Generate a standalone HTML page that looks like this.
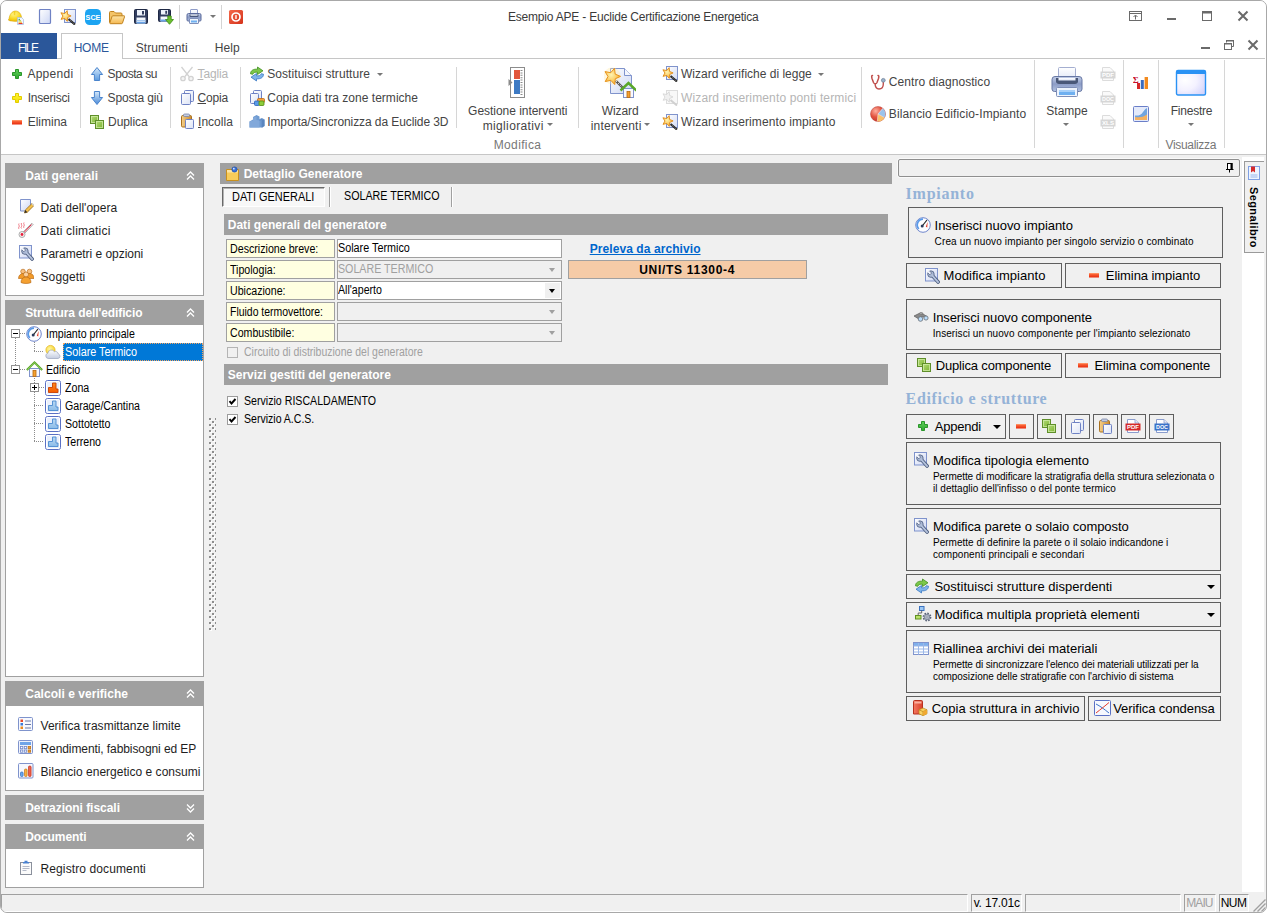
<!DOCTYPE html>
<html lang="it"><head><meta charset="utf-8"><title>Euclide Certificazione Energetica</title><style>
html,body{margin:0;padding:0}
body{width:1267px;height:913px;background:#fff;overflow:hidden;position:relative;font-family:"Liberation Sans",sans-serif}
#win{position:absolute;left:0;top:0;width:1265px;height:911px;border:1px solid #a8a8a8;border-radius:7px;background:#f0f0f0;overflow:hidden}
#win div,#win svg{position:absolute}
.ic{line-height:0}
.ic>svg{position:static!important;display:block}
#win span{white-space:pre}
.seg{font-family:"Liberation Sans",sans-serif;font-size:12px;color:#444}
.ms{font-family:"Liberation Sans",sans-serif;font-size:12px;color:#000}
.hdr{font-family:"Liberation Sans",sans-serif;font-size:12px;font-weight:bold;color:#fff}
.tah,.tah13{font-family:"Liberation Sans",sans-serif;font-size:13px;color:#000}
.tah10{font-family:"Liberation Sans",sans-serif;font-size:10px;color:#000}
.ser{font-family:"Liberation Serif",serif;font-size:16px;font-weight:bold;color:#95b3d7}
</style></head>
<body><div id="win"><div id="o" style="left:-1px;top:-1px;width:1267px;height:913px">
<div style="left:0px;top:0px;width:1267px;height:154px;background:#fff"></div>
<div class="ic" style="left:8px;top:9px;"><svg width="16" height="16" viewBox="0 0 16 16"><defs><radialGradient id="g22" cx="0.4" cy="0.3" r="0.8"><stop offset="0" stop-color="#fff68a"/><stop offset="0.6" stop-color="#f8d41e"/><stop offset="1" stop-color="#e8a800"/></radialGradient></defs><path d="M1 11.500c-.8-.3-.7-1.300 0-1.600C1.500 5.500 4 2 7.500 2s6 3 6.300 7.800c.7.300.9 1.300.1 1.700-3 1.200-10 1.200-12.900 0z" fill="url(#g22)" stroke="#d8a400" stroke-width=".5"/><path d="M6.500 2.200v4" stroke="#f0c000" stroke-width="1.600" opacity=".6"/><path d="M9.500 8.500h4l2 2v5h-6z" fill="#f2f7ff" stroke="#a4badc" stroke-width=".7"/><path d="M10.500 10.300h1.500" stroke="#2a9a3a" stroke-width="1"/><path d="M10.500 11.800h2.500" stroke="#9acc2a" stroke-width="1"/><path d="M10.500 13.200h3.500" stroke="#f4b41e" stroke-width="1"/><path d="M10.500 14.500h4" stroke="#e83a2a" stroke-width="1"/></svg></div>
<div class="ic" style="left:37px;top:9px;"><svg width="16" height="16" viewBox="0 0 16 16"><defs><linearGradient id="g12" x1="0" y1="0" x2="1" y2="1"><stop offset="0" stop-color="#ffffff"/><stop offset="1" stop-color="#ccd6f4"/></linearGradient></defs><rect x="2.500" y=".5" width="11" height="14" rx="1" fill="url(#g12)" stroke="#6f82c4" stroke-width="1.200"/></svg></div>
<div class="ic" style="left:60px;top:9px;"><svg width="16" height="16" viewBox="0 0 16 16"><defs><radialGradient id="g9" cx="0.4" cy="0.4" r="0.7"><stop offset="0" stop-color="#fff4b0"/><stop offset="1" stop-color="#f8a820"/></radialGradient><linearGradient id="g10" x1="0" y1="0" x2="1" y2="1"><stop offset="0" stop-color="#ffffff"/><stop offset="1" stop-color="#d4dcf4"/></linearGradient></defs><rect x="4.500" y=".5" width="11" height="13" fill="url(#g10)" stroke="#7f93cc"/><polygon points="7.15,1.65 7.58,5.44 11.10,6.92 7.62,8.50 7.31,12.30 4.73,9.48 1.02,10.36 2.90,7.04 0.92,3.77 4.66,4.54" fill="url(#g9)" stroke="#e08a18" stroke-width="0.9" stroke-linejoin="round"/><path d="M8.500 10L15 15.500" stroke="#1e1e1e" stroke-width="2.200"/><path d="M8.500 10L15 15.500" stroke="#b0b0b0" stroke-width=".8" stroke-dasharray="1 1"/></svg></div>
<div class="ic" style="left:85px;top:9px;"><svg width="16" height="16" viewBox="0 0 16 16"><rect x="0" y="0" width="16" height="16" rx="4.500" fill="#1ca4f2"/><text x="8" y="10.700" font-family="Liberation Sans, sans-serif" font-size="7.200" font-weight="bold" fill="#fff" text-anchor="middle">SCE</text></svg></div>
<div class="ic" style="left:109px;top:10px;"><svg width="16" height="16" viewBox="0 0 16 16"><defs><linearGradient id="g23" x1="0" y1="0" x2="0" y2="1"><stop offset="0" stop-color="#fde4a8"/><stop offset="1" stop-color="#f4b850"/></linearGradient></defs><path d="M.5 12.500V2.500a1 1 0 0 1 1-1h3.500l1.500 1.500h5.500a1 1 0 0 1 1 1v2" fill="#f4c468" stroke="#c0821e"/><path d="M.8 13L3 6.500a1 1 0 0 1 1-.7h11a.6.600 0 0 1 .6.800L13.500 13a1 1 0 0 1-1 .7H1.500a.7.700 0 0 1-.7-.7z" fill="url(#g23)" stroke="#c0821e" stroke-linejoin="round"/></svg></div>
<div class="ic" style="left:133px;top:9px;"><svg width="16" height="16" viewBox="0 0 16 16"><path d="M1.500 1.500a1 1 0 0 1 1-1h11a1 1 0 0 1 1 1v12a1 1 0 0 1-1 1h-11a1 1 0 0 1-1-1z" fill="#323e60" stroke="#1e2844"/><rect x="4" y="1" width="8" height="5.500" fill="#eef3fb"/><rect x="9" y="2" width="2" height="3.500" fill="#323e60"/><rect x="3.500" y="8.500" width="9" height="6" fill="#f4f8fe"/><rect x="3.500" y="11" width="9" height="1.500" fill="#a4c8f0"/><rect x="3.500" y="13" width="9" height="1.500" fill="#6aa4e8"/></svg></div>
<div class="ic" style="left:158px;top:9px;"><svg width="16" height="16" viewBox="0 0 16 16"><path d="M.5 1.500a1 1 0 0 1 1-1h10a1 1 0 0 1 1 1v10a1 1 0 0 1-1 1h-10a1 1 0 0 1-1-1z" fill="#323e60" stroke="#1e2844"/><rect x="3" y="1" width="7" height="4.500" fill="#eef3fb"/><rect x="7.300" y="1.800" width="1.800" height="3" fill="#323e60"/><rect x="2.500" y="7.500" width="8" height="5" fill="#f4f8fe"/><rect x="2.500" y="10.500" width="8" height="2" fill="#6aa4e8"/><path d="M9.800 7h3.400v3.500h2.300L11.500 15.300 7.500 10.500h2.300z" fill="#6cc02e" stroke="#3a8a12" stroke-width=".8" stroke-linejoin="round"/></svg></div>
<div class="ic" style="left:186px;top:9px;"><svg width="16" height="16" viewBox="0 0 16 16"><defs><linearGradient id="g14" x1="0" y1="0" x2="0" y2="1"><stop offset="0" stop-color="#c2cee8"/><stop offset="0.5" stop-color="#8c9cc6"/><stop offset="1" stop-color="#b2c2e2"/></linearGradient><linearGradient id="g15" x1="0" y1="0" x2="0" y2="1"><stop offset="0" stop-color="#ffffff"/><stop offset="1" stop-color="#dfe6f6"/></linearGradient></defs><rect x="4.500" y=".5" width="7" height="6" rx=".5" fill="url(#g15)" stroke="#8f9cc8"/><path d="M2.500 4.500h11a1.500 1.500 0 0 1 1.500 1.500v5a1 1 0 0 1-1 1h-12a1 1 0 0 1-1-1V6a1.500 1.500 0 0 1 1.500-1.500z" fill="url(#g14)" stroke="#5a6a9c"/><path d="M3.500 5.500h9V7a1 1 0 0 1-1 1h-7a1 1 0 0 1-1-1z" fill="#46557a"/><rect x="4.500" y="5.500" width="7" height="1.200" fill="#f4f8ff"/><rect x="3.500" y="9.500" width="9" height="5" rx=".5" fill="#eef4fd" stroke="#7f8fb8"/><rect x="5" y="11.500" width="6" height="2" fill="#6fb0f0"/></svg></div>
<div class="ic" style="left:228px;top:9px;"><svg width="16" height="16" viewBox="0 0 16 16"><defs><linearGradient id="g24" x1="0" y1="0" x2="1" y2="1"><stop offset="0" stop-color="#f4684a"/><stop offset="1" stop-color="#d4321a"/></linearGradient></defs><rect x="1" y="1" width="14" height="14" rx="1.500" fill="url(#g24)"/><circle cx="8" cy="8" r="4" fill="none" stroke="#fff" stroke-width="1.700"/><rect x="7.300" y="6" width="1.400" height="4" rx=".5" fill="#fff"/></svg></div>
<div style="left:179px;top:5px;width:1px;height:24px;background:#d4d4d4"></div>
<div style="left:221px;top:5px;width:1px;height:24px;background:#d4d4d4"></div>
<div style="left:209.500px;top:15px;width:0;height:0;border-left:3px solid transparent;border-right:3px solid transparent;border-top:3px solid #777"></div>
<div class="seg" style="left:508.0px;top:8.5px;line-height:16px;height:16px;color:#3a3a3a"><span id="t1" style="letter-spacing:-0.203px;">Esempio APE - Euclide Certificazione Energetica</span></div>
<svg style="left:1128px;top:10px" width="16" height="12" viewBox="0 0 16 12"><rect x="1.500" y="1.500" width="12" height="9" fill="none" stroke="#6a6a6a" stroke-width="1"/><path d="M1.500 3.500h12" stroke="#6a6a6a"/><path d="M7.500 9.500v-4M5.500 7l2-2 2 2" fill="none" stroke="#6a6a6a" stroke-width="1"/></svg>
<div style="left:1167px;top:18px;width:9px;height:2px;background:#6a6a6a"></div>
<svg style="left:1201px;top:10px" width="12" height="12" viewBox="0 0 12 12"><rect x="1.500" y="1.500" width="9" height="9" fill="none" stroke="#6a6a6a"/><rect x="1" y="1" width="10" height="2.500" fill="#6a6a6a"/></svg>
<svg style="left:1237px;top:10px" width="12" height="12" viewBox="0 0 12 12"><path d="M1.500 1.500l9 9M10.500 1.500l-9 9" stroke="#6a6a6a" stroke-width="2"/></svg>
<div style="left:1201px;top:47px;width:9px;height:2px;background:#6a6a6a"></div>
<svg style="left:1223px;top:39px" width="12" height="12" viewBox="0 0 12 12"><path d="M3.500 3.500v-2h7v6h-2" fill="none" stroke="#6a6a6a"/><rect x="3" y="1" width="8" height="1.500" fill="#6a6a6a"/><rect x="1.500" y="4.500" width="7" height="6" fill="#fff" stroke="#6a6a6a"/><rect x="1" y="4" width="8" height="1.500" fill="#6a6a6a"/></svg>
<svg style="left:1247px;top:39px" width="12" height="12" viewBox="0 0 12 12"><path d="M1.500 1.500l9 9M10.500 1.500l-9 9" stroke="#6a6a6a" stroke-width="2"/></svg>
<div style="left:0px;top:58px;width:1265px;height:1px;background:#c6c6c6"></div>
<div style="left:1px;top:33px;width:56px;height:26px;background:#2b579a"></div>
<div class="seg" style="left:18.1px;top:39.5px;line-height:16px;height:16px;color:#fff"><span id="t2" style="letter-spacing:-1.448px;">FILE</span></div>
<div style="left:61px;top:33px;width:60px;height:25px;background:#fff;border:1px solid #c6c6c6;border-bottom:none;box-sizing:content-box"></div>
<div class="seg" style="left:73.7px;top:39.5px;line-height:16px;height:16px;color:#2b579a"><span id="t3" style="letter-spacing:-0.267px;">HOME</span></div>
<div class="seg" style="left:135.7px;top:39.5px;line-height:16px;height:16px;color:#444"><span id="t4" style="letter-spacing:0.080px;">Strumenti</span></div>
<div class="seg" style="left:214.7px;top:39.5px;line-height:16px;height:16px;color:#444"><span id="t5" style="letter-spacing:0.071px;">Help</span></div>
<div style="left:0px;top:154px;width:1267px;height:1px;background:#c6c6c6"></div>
<div class="ic" style="left:9px;top:66px;"><svg width="16" height="16" viewBox="0 0 16 16"><defs><linearGradient id="g1" x1="0" y1="0" x2="0" y2="1"><stop offset="0" stop-color="#5fd05a"/><stop offset="1" stop-color="#2fa82f"/></linearGradient></defs><path d="M6.500 3.500h3v3h3v3h-3v3h-3v-3h-3v-3h3z" fill="url(#g1)" stroke="#2a962a" stroke-width="1" stroke-linejoin="round"/></svg></div>
<div class="seg" style="left:27.4px;top:66.0px;line-height:16px;height:16px;color:#444"><span id="t6" style="letter-spacing:0.276px;">Appendi</span></div>
<div class="ic" style="left:9px;top:90px;"><svg width="16" height="16" viewBox="0 0 16 16"><defs><linearGradient id="g2" x1="0" y1="0" x2="0" y2="1"><stop offset="0" stop-color="#fff43a"/><stop offset="1" stop-color="#f4e000"/></linearGradient></defs><path d="M6.500 3.500h3v3h3v3h-3v3h-3v-3h-3v-3h3z" fill="url(#g2)" stroke="#e2cc00" stroke-width="1" stroke-linejoin="round"/></svg></div>
<div class="seg" style="left:27.7px;top:90.0px;line-height:16px;height:16px;color:#444"><span id="t7" style="letter-spacing:-0.214px;">Inserisci</span></div>
<div class="ic" style="left:9px;top:114px;"><svg width="16" height="16" viewBox="0 0 16 16"><defs><linearGradient id="g3" x1="0" y1="0" x2="0" y2="1"><stop offset="0" stop-color="#ff7a4a"/><stop offset="1" stop-color="#e8280a"/></linearGradient></defs><rect x="3" y="6" width="10" height="4.500" fill="url(#g3)"/><rect x="3" y="6" width="10" height="1" fill="#ff9a6a" opacity=".7"/></svg></div>
<div class="seg" style="left:27.7px;top:114.0px;line-height:16px;height:16px;color:#444"><span id="t8" style="letter-spacing:-0.010px;">Elimina</span></div>
<div class="ic" style="left:89px;top:66px;"><svg width="16" height="16" viewBox="0 0 16 16"><defs><linearGradient id="g4" x1="0" y1="0" x2="0" y2="1"><stop offset="0" stop-color="#d4e8fa"/><stop offset="1" stop-color="#5b9be0"/></linearGradient></defs><path d="M8 1.500L13.600 8.500h-3v6h-5.200v-6h-3z" fill="url(#g4)" stroke="#4a84cc" stroke-width="1" stroke-linejoin="round"/></svg></div>
<div class="seg" style="left:107.6px;top:66.0px;line-height:16px;height:16px;color:#444"><span id="t9" style="letter-spacing:-0.434px;">Sposta su</span></div>
<div class="ic" style="left:89px;top:90px;"><svg width="16" height="16" viewBox="0 0 16 16"><defs><linearGradient id="g5" x1="0" y1="0" x2="0" y2="1"><stop offset="0" stop-color="#d4e8fa"/><stop offset="1" stop-color="#4a8ad8"/></linearGradient></defs><path d="M8 14.500L13.600 7.500h-3v-6h-5.200v6h-3z" fill="url(#g5)" stroke="#4a84cc" stroke-width="1" stroke-linejoin="round"/></svg></div>
<div class="seg" style="left:107.6px;top:90.0px;line-height:16px;height:16px;color:#444"><span id="t10" style="letter-spacing:-0.147px;">Sposta giù</span></div>
<div class="ic" style="left:89px;top:114px;"><svg width="16" height="16" viewBox="0 0 16 16"><defs><linearGradient id="g6" x1="0" y1="0" x2="1" y2="1"><stop offset="0" stop-color="#b5dd7a"/><stop offset="1" stop-color="#79b02e"/></linearGradient></defs><rect x="1.500" y="1.500" width="8" height="8" fill="url(#g6)" stroke="#5f8f2a"/><rect x="2.500" y="2.500" width="6" height="6" fill="none" stroke="#d5efae" stroke-width="1" opacity=".7"/><rect x="6.500" y="6.500" width="8" height="8" fill="url(#g6)" stroke="#5f8f2a"/><rect x="7.500" y="7.500" width="6" height="6" fill="none" stroke="#d5efae" stroke-width="1" opacity=".7"/></svg></div>
<div class="seg" style="left:108.1px;top:114.0px;line-height:16px;height:16px;color:#444"><span id="t11" style="letter-spacing:-0.089px;">Duplica</span></div>
<div class="ic" style="left:179px;top:66px;"><svg width="16" height="16" viewBox="0 0 16 16"><g stroke="#d2d2d2" fill="none" stroke-width="1.300"><path d="M2.500 1L10 10.500M13.500 1L6 10.500"/><circle cx="4" cy="12.500" r="2.200" fill="#f4f4f4"/><circle cx="12" cy="12.500" r="2.200" fill="#f4f4f4"/></g></svg></div>
<div class="seg" style="left:197.5px;top:66.0px;line-height:16px;height:16px;color:#b5b5b5"><span id="t12" style="letter-spacing:-0.112px;"><u>T</u>aglia</span></div>
<div class="ic" style="left:179px;top:89px;"><svg width="16" height="16" viewBox="0 0 16 16"><defs><linearGradient id="g7" x1="0" y1="0" x2="1" y2="1"><stop offset="0" stop-color="#ffffff"/><stop offset="1" stop-color="#dde4f6"/></linearGradient></defs><rect x="5.500" y="1.500" width="9" height="11" rx="1" fill="url(#g7)" stroke="#6f82c4"/><rect x="2.500" y="4.500" width="9" height="11" rx="1" fill="url(#g7)" stroke="#6f82c4"/></svg></div>
<div class="seg" style="left:197.5px;top:90.0px;line-height:16px;height:16px;color:#444"><span id="t13" style="letter-spacing:-0.140px;"><u>C</u>opia</span></div>
<div class="ic" style="left:179px;top:113px;"><svg width="16" height="16" viewBox="0 0 16 16"><defs><linearGradient id="g7" x1="0" y1="0" x2="1" y2="1"><stop offset="0" stop-color="#ffffff"/><stop offset="1" stop-color="#dde4f6"/></linearGradient><linearGradient id="g8" x1="0" y1="0" x2="1" y2="0"><stop offset="0" stop-color="#f6d08a"/><stop offset="1" stop-color="#c98a2e"/></linearGradient></defs><rect x="2.500" y="2.500" width="10" height="11.500" rx="1.200" fill="url(#g8)" stroke="#a8701e"/><rect x="4.500" y="1" width="6" height="2.500" rx="1" fill="#c4cce0" stroke="#7a86a8" stroke-width=".8"/><rect x="6.500" y="6.500" width="8" height="9" rx=".8" fill="url(#g7)" stroke="#6f82c4"/></svg></div>
<div class="seg" style="left:198.0px;top:114.0px;line-height:16px;height:16px;color:#444"><span id="t14" style="letter-spacing:0.033px;"><u>I</u>ncolla</span></div>
<div class="ic" style="left:249px;top:66px;"><svg width="16" height="16" viewBox="0 0 16 16"><path d="M1.500 7.800C1.500 4.500 4.500 2.800 8.500 3.200V1l5.500 3.800-5.500 3.700V6.200C6 5.900 4.300 6.600 3.800 8.300z" fill="#7cc84a" stroke="#3f8f1e" stroke-width=".8" stroke-linejoin="round"/><path d="M14.500 8.200c0 3.300-3 5-7 4.600V15L2 11.200l5.500-3.700v2.300c2.500.300 4.200-.4 4.700-2.100z" fill="#7fb4ea" stroke="#3a78c4" stroke-width=".8" stroke-linejoin="round"/></svg></div>
<div class="seg" style="left:267.2px;top:66.0px;line-height:16px;height:16px;color:#444"><span id="t15" style="letter-spacing:0.071px;">Sostituisci strutture</span></div>
<div style="left:377px;top:73px;width:0;height:0;border-left:3px solid transparent;border-right:3px solid transparent;border-top:3px solid #777"></div>
<div class="ic" style="left:249px;top:90px;"><svg width="16" height="16" viewBox="0 0 16 16"><defs><linearGradient id="g7" x1="0" y1="0" x2="1" y2="1"><stop offset="0" stop-color="#ffffff"/><stop offset="1" stop-color="#dde4f6"/></linearGradient></defs><rect x="4.500" y=".5" width="8" height="10" rx="1" fill="url(#g7)" stroke="#6f82c4"/><rect x="1.500" y="3.500" width="8" height="10" rx="1" fill="url(#g7)" stroke="#6f82c4"/><rect x="8.500" y="8.500" width="7" height="4" rx="1" fill="#f4a040" stroke="#c06a10" stroke-width=".8"/><rect x="5.500" y="11" width="5" height="4.500" rx="1" fill="#5a9ae8" stroke="#2a62b8" stroke-width=".8"/><rect x="10" y="11" width="5" height="4.500" rx="1" fill="#8ccc3a" stroke="#4f8a10" stroke-width=".8"/></svg></div>
<div class="seg" style="left:267.2px;top:90.0px;line-height:16px;height:16px;color:#444"><span id="t16" style="letter-spacing:0.027px;">Copia dati tra zone termiche</span></div>
<div class="ic" style="left:249px;top:113px;"><svg width="16" height="16" viewBox="0 0 16 16"><path d="M.5 14.500V8.500L4 6.500V4L7.500 2l3 1.500V6L13 5l2.500 1.500v6.500l-2.500 1.500z" fill="#6f9bd1"/><path d="M.5 14.500V8.500l3.500-1v-3l3.500-1V7l3 .5v7z" fill="#83aada" opacity=".9"/><path d="M10.500 7.500L13 6v8.500" fill="none" stroke="#5a86bf" stroke-width=".8"/><path d="M13 14.500V7l2.500-.5v6.500z" fill="#5a86bf"/></svg></div>
<div class="seg" style="left:267.2px;top:114.0px;line-height:16px;height:16px;color:#444"><span id="t17" style="letter-spacing:-0.087px;">Importa/Sincronizza da Euclide 3D</span></div>
<div style="left:80px;top:67px;width:1px;height:61px;background:#d6d6d6"></div>
<div style="left:170px;top:67px;width:1px;height:61px;background:#d6d6d6"></div>
<div style="left:240px;top:67px;width:1px;height:61px;background:#d6d6d6"></div>
<div style="left:456px;top:67px;width:1px;height:61px;background:#d6d6d6"></div>
<div style="left:578px;top:67px;width:1px;height:61px;background:#d6d6d6"></div>
<div style="left:861px;top:67px;width:1px;height:61px;background:#d6d6d6"></div>
<div style="left:1034px;top:60px;width:1px;height:88px;background:#d6d6d6"></div>
<div style="left:1123px;top:60px;width:1px;height:88px;background:#d6d6d6"></div>
<div style="left:1158px;top:60px;width:1px;height:88px;background:#d6d6d6"></div>
<div style="left:1224px;top:60px;width:1px;height:88px;background:#d6d6d6"></div>
<div class="ic" style="left:508px;top:66px;"><svg width="18" height="32" viewBox="0 0 18 32"><rect x="2.500" y="1.500" width="14" height="30" fill="#fff" stroke="#8c8c8c"/><rect x="6" y="4" width="6" height="9" fill="#e2553a"/><rect x="6" y="14" width="6" height="14" fill="#3d7ac4"/><path d="M13.500 4v25" stroke="#8a8a8a" stroke-width="2" stroke-dasharray="1 1.400"/><path d="M.5 13l4 3.500-4 3.500z" fill="#8a8a8a"/></svg></div>
<div class="seg" style="left:317.8px;top:103.0px;width:400px;text-align:center;line-height:16px;height:16px;color:#444"><span id="t18" style="letter-spacing:-0.037px;">Gestione interventi</span></div>
<div class="seg" style="left:313.2px;top:118.0px;width:400px;text-align:center;line-height:16px;height:16px;color:#444"><span id="t19" style="letter-spacing:0.365px;">migliorativi</span></div>
<div style="left:546.5px;top:123px;width:0;height:0;border-left:3px solid transparent;border-right:3px solid transparent;border-top:3px solid #777"></div>
<div class="seg" style="left:317.5px;top:137.0px;width:400px;text-align:center;line-height:16px;height:16px;color:#777"><span id="t20" style="letter-spacing:0.359px;">Modifica</span></div>
<div class="ic" style="left:604px;top:66px;"><svg width="32" height="32" viewBox="0 0 32 32"><defs><radialGradient id="g11" cx="0.4" cy="0.4" r="0.7"><stop offset="0" stop-color="#fff4b0"/><stop offset="1" stop-color="#f8a820"/></radialGradient><linearGradient id="g12" x1="0" y1="0" x2="1" y2="1"><stop offset="0" stop-color="#ffffff"/><stop offset="1" stop-color="#ccd6f4"/></linearGradient></defs><path d="M6.500 2.500h14l7 7v18h-21z" fill="url(#g12)" stroke="#7f93cc"/><path d="M20.500 2.500v7h7" fill="#f4f6fd" stroke="#7f93cc"/><circle cx="8" cy="10" r="8.500" fill="#ffe9a0" opacity=".35"/><polygon points="10.51,2.38 11.20,8.10 16.50,10.38 11.27,12.81 10.74,18.55 6.82,14.32 1.19,15.59 4.00,10.56 1.05,5.60 6.71,6.71" fill="url(#g11)" stroke="#e8921a" stroke-width="1" stroke-linejoin="round"/><path d="M12 15L21 24" stroke="#555" stroke-width="2.400"/><path d="M12 15L21 24" stroke="#ddd" stroke-width="1" stroke-dasharray="1.500 1.500"/><rect x="19.500" y="22.500" width="10" height="9" fill="#f8f9ff" stroke="#7f93cc"/><path d="M16.500 24.500l8-7.500 8 7.500" fill="none" stroke="#5aa828" stroke-width="2.400"/><rect x="23" y="25.500" width="3" height="6" fill="#f4a030" stroke="#b86a10" stroke-width=".8"/></svg></div>
<div class="seg" style="left:420.2px;top:103.0px;width:400px;text-align:center;line-height:16px;height:16px;color:#444"><span id="t21" style="letter-spacing:-0.109px;">Wizard</span></div>
<div class="seg" style="left:416.1px;top:118.0px;width:400px;text-align:center;line-height:16px;height:16px;color:#444"><span id="t22" style="letter-spacing:0.222px;">interventi</span></div>
<div style="left:644.4px;top:123px;width:0;height:0;border-left:3px solid transparent;border-right:3px solid transparent;border-top:3px solid #777"></div>
<div class="ic" style="left:661.5px;top:66px;"><svg width="16" height="16" viewBox="0 0 16 16"><defs><radialGradient id="g9" cx="0.4" cy="0.4" r="0.7"><stop offset="0" stop-color="#fff4b0"/><stop offset="1" stop-color="#f8a820"/></radialGradient><linearGradient id="g10" x1="0" y1="0" x2="1" y2="1"><stop offset="0" stop-color="#ffffff"/><stop offset="1" stop-color="#d4dcf4"/></linearGradient></defs><rect x="4.500" y=".5" width="11" height="13" fill="url(#g10)" stroke="#7f93cc"/><polygon points="7.15,1.65 7.58,5.44 11.10,6.92 7.62,8.50 7.31,12.30 4.73,9.48 1.02,10.36 2.90,7.04 0.92,3.77 4.66,4.54" fill="url(#g9)" stroke="#e08a18" stroke-width="0.9" stroke-linejoin="round"/><path d="M8.500 10L15 15.500" stroke="#1e1e1e" stroke-width="2.200"/><path d="M8.500 10L15 15.500" stroke="#b0b0b0" stroke-width=".8" stroke-dasharray="1 1"/></svg></div>
<div class="seg" style="left:681.0px;top:66.0px;line-height:16px;height:16px;color:#444"><span id="t23" style="letter-spacing:0.003px;">Wizard verifiche di legge</span></div>
<div style="left:818px;top:73px;width:0;height:0;border-left:3px solid transparent;border-right:3px solid transparent;border-top:3px solid #777"></div>
<div class="ic" style="left:661.5px;top:90px;"><svg width="16" height="16" viewBox="0 0 16 16"><rect x="4.500" y=".5" width="11" height="13" fill="#f8f8f8" stroke="#dcdcdc"/><polygon points="7.13,1.75 7.58,5.44 11.00,6.92 7.62,8.50 7.27,12.21 4.73,9.48 1.10,10.30 2.90,7.04 1.01,3.83 4.66,4.54" fill="#f0f0f0" stroke="#d4d4d4" stroke-width="0.8" stroke-linejoin="round"/><path d="M8.500 10L15 15.500" stroke="#d0d0d0" stroke-width="2"/></svg></div>
<div class="seg" style="left:681.0px;top:90.0px;line-height:16px;height:16px;color:#b5b5b5"><span id="t24" style="letter-spacing:0.140px;">Wizard inserimento ponti termici</span></div>
<div class="ic" style="left:661.5px;top:114px;"><svg width="16" height="16" viewBox="0 0 16 16"><defs><radialGradient id="g9" cx="0.4" cy="0.4" r="0.7"><stop offset="0" stop-color="#fff4b0"/><stop offset="1" stop-color="#f8a820"/></radialGradient><linearGradient id="g10" x1="0" y1="0" x2="1" y2="1"><stop offset="0" stop-color="#ffffff"/><stop offset="1" stop-color="#d4dcf4"/></linearGradient></defs><rect x="4.500" y=".5" width="11" height="13" fill="url(#g10)" stroke="#7f93cc"/><polygon points="7.15,1.65 7.58,5.44 11.10,6.92 7.62,8.50 7.31,12.30 4.73,9.48 1.02,10.36 2.90,7.04 0.92,3.77 4.66,4.54" fill="url(#g9)" stroke="#e08a18" stroke-width="0.9" stroke-linejoin="round"/><path d="M8.500 10L15 15.500" stroke="#1e1e1e" stroke-width="2.200"/><path d="M8.500 10L15 15.500" stroke="#b0b0b0" stroke-width=".8" stroke-dasharray="1 1"/></svg></div>
<div class="seg" style="left:681.0px;top:114.0px;line-height:16px;height:16px;color:#444"><span id="t25" style="letter-spacing:0.112px;">Wizard inserimento impianto</span></div>
<div class="ic" style="left:870px;top:74px;"><svg width="16" height="16" viewBox="0 0 16 16"><path d="M2.500 1.500c-1 0-1 1 -.5 3l1.500 4c.8 1.800 2.700 1.800 3.500 0l1.500-4c.5-2 .5-3-.5-3" fill="none" stroke="#c0504d" stroke-width="1.500" stroke-linecap="round"/><path d="M5.200 9.800c-.2 3 1.300 5.200 3.800 5.200s4.300-2 4.300-5V8" fill="none" stroke="#c0504d" stroke-width="1.400"/><circle cx="13.300" cy="6.300" r="1.900" fill="#9ab0c8" stroke="#6a7f98" stroke-width=".7"/></svg></div>
<div class="seg" style="left:888.8px;top:73.5px;line-height:16px;height:16px;color:#444"><span id="t26" style="letter-spacing:0.073px;">Centro diagnostico</span></div>
<div class="ic" style="left:870px;top:106px;"><svg width="16" height="16" viewBox="0 0 16 16"><defs><radialGradient id="g13" cx="0.35" cy="0.3" r="0.8"><stop offset="0" stop-color="#ffb0a0"/><stop offset="0.5" stop-color="#e2533f"/><stop offset="1" stop-color="#c0302a"/></radialGradient></defs><circle cx="8" cy="8" r="7.500" fill="url(#g13)" stroke="#b8403a" stroke-width=".5"/><path d="M8 8L12.800 2.300A7.500 7.500 0 0 1 14.500 11.700z" fill="#9cc4ec"/><path d="M8 8l6.500 3.700A7.500 7.500 0 0 1 7.300 15.400z" fill="#f8c06a"/><path d="M8 8L12.800 2.300M8 8l6.500 3.700M8 8l-.7 7.400" stroke="#fff" stroke-width=".6" opacity=".8"/></svg></div>
<div class="seg" style="left:888.8px;top:105.5px;line-height:16px;height:16px;color:#444"><span id="t27" style="letter-spacing:0.130px;">Bilancio Edificio-Impianto</span></div>
<div class="ic" style="left:1051px;top:66px;"><svg width="32" height="32" viewBox="0 0 32 32"><defs><linearGradient id="g14" x1="0" y1="0" x2="0" y2="1"><stop offset="0" stop-color="#c2cee8"/><stop offset="0.5" stop-color="#8c9cc6"/><stop offset="1" stop-color="#b2c2e2"/></linearGradient><linearGradient id="g15" x1="0" y1="0" x2="0" y2="1"><stop offset="0" stop-color="#ffffff"/><stop offset="1" stop-color="#dfe6f6"/></linearGradient></defs><rect x="7.500" y="1.500" width="17" height="13" rx="1" fill="url(#g15)" stroke="#a4aed0"/><path d="M4 10.500h24a3 3 0 0 1 3 3V23a2.500 2.500 0 0 1-2.500 2.500h-25A2.500 2.500 0 0 1 1 23v-9.500a3 3 0 0 1 3-3z" fill="url(#g14)" stroke="#6878a4"/><path d="M5 12h22v3.500c0 1.500-1.500 2.500-3 2.500H8c-1.500 0-3-1-3-2.500z" fill="#4a5878"/><rect x="7.500" y="12" width="17" height="2.500" fill="url(#g15)"/><rect x="5.500" y="21.500" width="21" height="9" rx="1" fill="#eef4fd" stroke="#7f8fb8"/><rect x="8" y="24" width="16" height="5" fill="#6fb0f0"/><rect x="8" y="24" width="16" height="2" fill="#a8d0f8"/></svg></div>
<div class="seg" style="left:867px;top:103.0px;width:400px;text-align:center;line-height:16px;height:16px;color:#444"><span id="t28" style="letter-spacing:-0.012px;">Stampe</span></div>
<div style="left:1063.3px;top:123px;width:0;height:0;border-left:3px solid transparent;border-right:3px solid transparent;border-top:3px solid #777"></div>
<div class="ic" style="left:1100px;top:66px;"><svg width="16" height="16" viewBox="0 0 16 16"><path d="M2.500 1.500h7.500l3.500 3.500v9.500h-11z" fill="#fafafa" stroke="#dcdcdc"/><rect x=".5" y="5.500" width="15" height="7" fill="#d6d6d6"/><text x="8" y="11.200" font-family="Liberation Sans, sans-serif" font-size="6" font-weight="bold" fill="#fff" text-anchor="middle" textLength="12" lengthAdjust="spacingAndGlyphs">PDF</text></svg></div>
<div class="ic" style="left:1100px;top:90px;"><svg width="16" height="16" viewBox="0 0 16 16"><path d="M2.500 1.500h7.500l3.500 3.500v9.500h-11z" fill="#fafafa" stroke="#dcdcdc"/><rect x=".5" y="5.500" width="15" height="7" fill="#d6d6d6"/><text x="8" y="11.200" font-family="Liberation Sans, sans-serif" font-size="6" font-weight="bold" fill="#fff" text-anchor="middle" textLength="12" lengthAdjust="spacingAndGlyphs">DOC</text></svg></div>
<div class="ic" style="left:1100px;top:114px;"><svg width="16" height="16" viewBox="0 0 16 16"><path d="M2.500 1.500h7.500l3.500 3.500v9.500h-11z" fill="#fafafa" stroke="#dcdcdc"/><rect x=".5" y="5.500" width="15" height="7" fill="#d6d6d6"/><text x="8" y="11.200" font-family="Liberation Sans, sans-serif" font-size="6" font-weight="bold" fill="#fff" text-anchor="middle" textLength="12" lengthAdjust="spacingAndGlyphs">XLS</text></svg></div>
<div class="ic" style="left:1133px;top:74px;"><svg width="16" height="16" viewBox="0 0 16 16"><text x="-.3" y="8.500" font-family="Liberation Serif, serif" font-size="9" font-weight="bold" fill="#c8102a">Σ</text><rect x="4" y="9" width="3" height="6" fill="#d62828"/><rect x="7.800" y="6" width="3" height="9" fill="#3a6cc0"/><rect x="11.600" y="3" width="3.400" height="12" fill="#f28a1e"/></svg></div>
<div class="ic" style="left:1133px;top:106px;"><svg width="16" height="16" viewBox="0 0 16 16"><rect x=".5" y=".5" width="15" height="15" rx="1" fill="#e4eafa" stroke="#6a7ec8"/><path d="M2 14V9.500c3.500.500 6-.5 8-3.500s3-3.500 4-4V14z" fill="#6fa4e0"/><path d="M2 14v-3c4 .5 8 .5 12-2.500V14z" fill="#f4b060"/></svg></div>
<div class="ic" style="left:1175px;top:66px;"><svg width="32" height="32" viewBox="0 0 32 32"><defs><radialGradient id="g16" cx="0.3" cy="0.4" r="0.8"><stop offset="0" stop-color="#ffffff"/><stop offset="0.5" stop-color="#f4f2ff"/><stop offset="1" stop-color="#d4d4fb"/></radialGradient></defs><rect x="1.500" y="4.500" width="29" height="24.500" rx="1.500" fill="url(#g16)" stroke="#2a92f4" stroke-width="1.400"/><path d="M1.500 5.500a1 1 0 0 1 1-1h27a1 1 0 0 1 1 1V8h-29z" fill="#2a92f4"/></svg></div>
<div class="seg" style="left:991.5px;top:103.0px;width:400px;text-align:center;line-height:16px;height:16px;color:#444"><span id="t29" style="letter-spacing:-0.223px;">Finestre</span></div>
<div style="left:1188px;top:123px;width:0;height:0;border-left:3px solid transparent;border-right:3px solid transparent;border-top:3px solid #777"></div>
<div class="seg" style="left:990.8px;top:137.0px;width:400px;text-align:center;line-height:16px;height:16px;color:#777"><span id="t30" style="letter-spacing:-0.335px;">Visualizza</span></div>
<div style="left:5px;top:163px;width:199px;height:25px;background:#a0a0a0"></div>
<div class="hdr" style="left:25.2px;top:167.5px;line-height:16px;height:16px;color:#fff"><span id="t31" style="letter-spacing:0.064px;">Dati generali</span></div>
<svg style="left:186px;top:171px" width="9" height="10" viewBox="0 0 9 10"><path d="M1 4.500l3.500-3.500 3.500 3.500M1 8.500l3.500-3.500 3.500 3.500" fill="none" stroke="#fff" stroke-width="1.300"/></svg>
<div style="left:5px;top:188px;width:199px;height:108px;background:#fff;border:1px solid #a0a0a0;border-top:none;box-sizing:border-box"></div>
<div class="ic" style="left:18px;top:198px;"><svg width="16" height="16" viewBox="0 0 16 16"><defs><linearGradient id="g12" x1="0" y1="0" x2="1" y2="1"><stop offset="0" stop-color="#ffffff"/><stop offset="1" stop-color="#ccd6f4"/></linearGradient></defs><path d="M2.500 1.500h10v8.500l-3 3h-7z" fill="url(#g12)" stroke="#7f93cc"/><path d="M6.500 15l.8-3L14 5.500l2 2-6.700 6.700z" fill="#f4c04a" stroke="#9a6a18" stroke-width=".8" stroke-linejoin="round"/><path d="M14 5.500l2 2" stroke="#d8d8d8" stroke-width="1.500"/><path d="M6.500 15l.8-3 2 2.200z" fill="#2a2a2a"/></svg></div>
<div class="seg" style="left:40.5px;top:199.5px;line-height:16px;height:16px;color:#1e1e1e"><span id="t32" style="letter-spacing:0.025px;">Dati dell'opera</span></div>
<div class="ic" style="left:18px;top:222px;"><svg width="16" height="16" viewBox="0 0 16 16"><path d="M13.800 1.200l1.300 1.300-9.300 9.800-1.800-1.300z" fill="#fafafa" stroke="#9a9a9a" stroke-width=".8"/><path d="M13.500 2.500L5.500 11" stroke="#e81e3a" stroke-width="1"/><circle cx="4" cy="12.500" r="3" fill="#f4f4f4" stroke="#9a9a9a" stroke-width=".8"/><circle cx="4" cy="12.500" r="1.400" fill="#e81e3a"/><path d="M1 1.500c-1 1.500 1 2 0 3.500s0 1.500 0 2M3.500 1c-1 1.500 1 2 0 3.500s0 1.500 0 2M6 .5C5 2 7 2.500 6 4s0 1.500 0 2" fill="none" stroke="#ea5a6a" stroke-width=".8"/></svg></div>
<div class="seg" style="left:40.5px;top:222.5px;line-height:16px;height:16px;color:#1e1e1e"><span id="t33" style="letter-spacing:0.189px;">Dati climatici</span></div>
<div class="ic" style="left:18px;top:244px;"><svg width="16" height="17" viewBox="0 0 16 17"><defs><linearGradient id="g12" x1="0" y1="0" x2="1" y2="1"><stop offset="0" stop-color="#ffffff"/><stop offset="1" stop-color="#ccd6f4"/></linearGradient></defs><rect x="1.500" y="1.500" width="12" height="12.500" fill="url(#g12)" stroke="#7f93cc"/><g transform="translate(1.800,2) scale(.88)"><path d="M7.500 7.500L14 14.800" stroke="#4a5a7c" stroke-width="4" stroke-linecap="round"/><circle cx="5.800" cy="5.800" r="3.700" fill="#a9b8d4" stroke="#4a5a7c" stroke-width=".9"/><path d="M7.500 7.500L14 14.800" stroke="#b4c2dc" stroke-width="2.200" stroke-linecap="round"/><path d="M4.600 6.600L1.600 3.600 3.600 1.600 6.600 4.600z" fill="#f2f5fd"/><path d="M2.300 4.300L4.600 6.600 6.600 4.600 4.300 2.300" fill="none" stroke="#4a5a7c" stroke-width=".8"/></g></svg></div>
<div class="seg" style="left:40.5px;top:245.5px;line-height:16px;height:16px;color:#1e1e1e"><span id="t34" style="letter-spacing:-0.038px;">Parametri e opzioni</span></div>
<div class="ic" style="left:18px;top:268px;"><svg width="16" height="16" viewBox="0 0 16 16"><g stroke="#b0620e" stroke-width=".6"><circle cx="5" cy="3.500" r="2.300" fill="#f8c080"/><circle cx="11.500" cy="3.500" r="2.300" fill="#f8c080"/><path d="M.5 10.500c0-3 2-5 4.500-5s3 1 3 1 .5-1 3.500-1 4.500 2 4.500 5z" fill="#f29a28"/><circle cx="8" cy="6.500" r="2.500" fill="#fad0a0"/><path d="M3 14.500c0-3.500 2.200-5.500 5-5.500s5 2 5 5.500c-2 1.300-8 1.300-10 0z" fill="#f4a030"/></g></svg></div>
<div class="seg" style="left:40.5px;top:268.5px;line-height:16px;height:16px;color:#1e1e1e"><span id="t35" style="letter-spacing:0.108px;">Soggetti</span></div>
<div style="left:5px;top:300px;width:199px;height:25px;background:#a0a0a0"></div>
<div class="hdr" style="left:25.2px;top:304.5px;line-height:16px;height:16px;color:#fff"><span id="t36" style="letter-spacing:-0.101px;">Struttura dell'edificio</span></div>
<svg style="left:186px;top:308px" width="9" height="10" viewBox="0 0 9 10"><path d="M1 4.500l3.500-3.500 3.500 3.500M1 8.500l3.500-3.500 3.500 3.500" fill="none" stroke="#fff" stroke-width="1.300"/></svg>
<div style="left:5px;top:325px;width:199px;height:352px;background:#fff;border:1px solid #a0a0a0;border-top:none;box-sizing:border-box"></div>
<div style="left:15px;top:338px;width:1px;height:27px;background-image:linear-gradient(#8c8c8c 50%,transparent 50%);background-size:1px 2px"></div>
<div style="left:20px;top:333px;width:6px;height:1px;background-image:linear-gradient(90deg,#8c8c8c 50%,transparent 50%);background-size:2px 1px"></div>
<div style="left:34px;top:342px;width:1px;height:9px;background-image:linear-gradient(#8c8c8c 50%,transparent 50%);background-size:1px 2px"></div>
<div style="left:34px;top:351px;width:10px;height:1px;background-image:linear-gradient(90deg,#8c8c8c 50%,transparent 50%);background-size:2px 1px"></div>
<div style="left:20px;top:369px;width:6px;height:1px;background-image:linear-gradient(90deg,#8c8c8c 50%,transparent 50%);background-size:2px 1px"></div>
<div style="left:34px;top:378px;width:1px;height:63px;background-image:linear-gradient(#8c8c8c 50%,transparent 50%);background-size:1px 2px"></div>
<div style="left:39px;top:387px;width:5px;height:1px;background-image:linear-gradient(90deg,#8c8c8c 50%,transparent 50%);background-size:2px 1px"></div>
<div style="left:34px;top:405px;width:10px;height:1px;background-image:linear-gradient(90deg,#8c8c8c 50%,transparent 50%);background-size:2px 1px"></div>
<div style="left:34px;top:423px;width:10px;height:1px;background-image:linear-gradient(90deg,#8c8c8c 50%,transparent 50%);background-size:2px 1px"></div>
<div style="left:34px;top:441px;width:10px;height:1px;background-image:linear-gradient(90deg,#8c8c8c 50%,transparent 50%);background-size:2px 1px"></div>
<div style="left:11px;top:329px;width:9px;height:9px;background:#fff;border:1px solid #919191;box-sizing:border-box"><div style="left:1px;top:3px;width:5px;height:1px;background:#000"></div></div>
<div style="left:11px;top:365px;width:9px;height:9px;background:#fff;border:1px solid #919191;box-sizing:border-box"><div style="left:1px;top:3px;width:5px;height:1px;background:#000"></div></div>
<div style="left:30px;top:383px;width:9px;height:9px;background:#fff;border:1px solid #919191;box-sizing:border-box"><div style="left:1px;top:3px;width:5px;height:1px;background:#000"></div><div style="left:3px;top:1px;width:1px;height:5px;background:#000"></div></div>
<div class="ic" style="left:26px;top:326px;"><svg width="16" height="16" viewBox="0 0 16 16"><circle cx="8" cy="8" r="7.300" fill="#fdfdff" stroke="#6f86cc" stroke-width="1"/><path d="M3.800 12A5.800 5.800 0 0 1 8 2.200" fill="none" stroke="#5a9ae8" stroke-width="1.800"/><path d="M12.600 5l-.3 5.500-1.500-.8z" fill="#e8402a"/><path d="M7.200 9L12 3" stroke="#222" stroke-width="1.200"/><circle cx="7.200" cy="9" r="1.500" fill="#2a3a5a"/></svg></div>
<div class="ms" style="left:45.7px;top:325.8px;line-height:16px;height:16px;"><span id="t37" style="display:inline-block;transform-origin:0 50%;transform:scaleX(0.8815);">Impianto principale</span></div>
<div class="ic" style="left:45px;top:344px;"><svg width="16" height="16" viewBox="0 0 16 16"><defs><radialGradient id="g17" cx="0.4" cy="0.4" r="0.7"><stop offset="0" stop-color="#fff8a0"/><stop offset="1" stop-color="#f4cc20"/></radialGradient><linearGradient id="g18" x1="0" y1="0" x2="0" y2="1"><stop offset="0" stop-color="#ffffff"/><stop offset="1" stop-color="#c4cce0"/></linearGradient></defs><circle cx="5.500" cy="6" r="4.600" fill="url(#g17)" stroke="#e4b420" stroke-width=".7"/><path d="M3.200 14.500a2.700 2.700 0 0 1-.4-5.300 3.600 3.600 0 0 1 6.600-1.500 2.800 2.800 0 0 1 3.900 2.300 2.300 2.300 0 0 1-.3 4.500z" fill="url(#g18)" stroke="#98a2bc" stroke-width=".7"/></svg></div>
<div style="left:63px;top:343px;width:140px;height:18px;background:#0078d7;border:1px dotted #f4a460;box-sizing:border-box"></div>
<div class="ms" style="left:64.9px;top:343.8px;line-height:16px;height:16px;color:#fff"><span id="t38" style="display:inline-block;transform-origin:0 50%;transform:scaleX(0.9021);">Solare Termico</span></div>
<div class="ic" style="left:26px;top:361px;"><svg width="17" height="16" viewBox="0 0 17 16"><rect x="3.500" y="7.500" width="10" height="8" fill="#f8f9ff" stroke="#7f93cc"/><path d="M.8 9L8.500 1.500 16.200 9" fill="none" stroke="#5aa828" stroke-width="2"/><path d="M1.500 8.600L8.500 1.800l7 6.800" fill="none" stroke="#a8dc7a" stroke-width=".7"/><rect x="7" y="9.500" width="3" height="6" fill="#f4a030" stroke="#b86a10" stroke-width=".8"/></svg></div>
<div class="ms" style="left:45.7px;top:361.8px;line-height:16px;height:16px;"><span id="t39" style="display:inline-block;transform-origin:0 50%;transform:scaleX(0.885);">Edificio</span></div>
<div class="ic" style="left:45px;top:380px;"><svg width="16" height="16" viewBox="0 0 16 16"><defs><linearGradient id="g19" x1="0" y1="0" x2="0" y2="1"><stop offset="0" stop-color="#ff8a20"/><stop offset="1" stop-color="#f45a00"/></linearGradient></defs><rect x=".5" y=".5" width="15" height="15" rx="2" fill="#eaf0fc" stroke="#5a70c4"/><rect x="1.500" y="1.500" width="13" height="13" rx="1" fill="none" stroke="#fff"/><path d="M3.500 12.500v-5h4v-4.500h3.500v6h2v3.500z" fill="url(#g19)" stroke="#c84000" stroke-width=".9" stroke-linejoin="round"/></svg></div>
<div class="ms" style="left:64.7px;top:379.8px;line-height:16px;height:16px;"><span id="t40" style="display:inline-block;transform-origin:0 50%;transform:scaleX(0.885);">Zona</span></div>
<div class="ic" style="left:45px;top:398px;"><svg width="16" height="16" viewBox="0 0 16 16"><defs><linearGradient id="g20" x1="0" y1="0" x2="0" y2="1"><stop offset="0" stop-color="#b8d8f4"/><stop offset="1" stop-color="#8cbce8"/></linearGradient></defs><rect x=".5" y=".5" width="15" height="15" rx="2" fill="#eaf0fc" stroke="#5a70c4"/><rect x="1.500" y="1.500" width="13" height="13" rx="1" fill="none" stroke="#fff"/><path d="M3.500 12.500v-5h4v-4.500h3.500v6h2v3.500z" fill="url(#g20)" stroke="#4a8ad0" stroke-width=".9" stroke-linejoin="round"/></svg></div>
<div class="ms" style="left:64.7px;top:397.8px;line-height:16px;height:16px;"><span id="t41" style="display:inline-block;transform-origin:0 50%;transform:scaleX(0.885);">Garage/Cantina</span></div>
<div class="ic" style="left:45px;top:416px;"><svg width="16" height="16" viewBox="0 0 16 16"><defs><linearGradient id="g20" x1="0" y1="0" x2="0" y2="1"><stop offset="0" stop-color="#b8d8f4"/><stop offset="1" stop-color="#8cbce8"/></linearGradient></defs><rect x=".5" y=".5" width="15" height="15" rx="2" fill="#eaf0fc" stroke="#5a70c4"/><rect x="1.500" y="1.500" width="13" height="13" rx="1" fill="none" stroke="#fff"/><path d="M3.500 12.500v-5h4v-4.500h3.500v6h2v3.500z" fill="url(#g20)" stroke="#4a8ad0" stroke-width=".9" stroke-linejoin="round"/></svg></div>
<div class="ms" style="left:64.7px;top:415.8px;line-height:16px;height:16px;"><span id="t42" style="display:inline-block;transform-origin:0 50%;transform:scaleX(0.885);">Sottotetto</span></div>
<div class="ic" style="left:45px;top:434px;"><svg width="16" height="16" viewBox="0 0 16 16"><defs><linearGradient id="g20" x1="0" y1="0" x2="0" y2="1"><stop offset="0" stop-color="#b8d8f4"/><stop offset="1" stop-color="#8cbce8"/></linearGradient></defs><rect x=".5" y=".5" width="15" height="15" rx="2" fill="#eaf0fc" stroke="#5a70c4"/><rect x="1.500" y="1.500" width="13" height="13" rx="1" fill="none" stroke="#fff"/><path d="M3.500 12.500v-5h4v-4.500h3.500v6h2v3.500z" fill="url(#g20)" stroke="#4a8ad0" stroke-width=".9" stroke-linejoin="round"/></svg></div>
<div class="ms" style="left:64.7px;top:433.8px;line-height:16px;height:16px;"><span id="t43" style="display:inline-block;transform-origin:0 50%;transform:scaleX(0.885);">Terreno</span></div>
<div style="left:5px;top:681px;width:199px;height:25px;background:#a0a0a0"></div>
<div class="hdr" style="left:25.2px;top:685.5px;line-height:16px;height:16px;color:#fff"><span id="t44" style="letter-spacing:0.042px;">Calcoli e verifiche</span></div>
<svg style="left:186px;top:689px" width="9" height="10" viewBox="0 0 9 10"><path d="M1 4.500l3.500-3.500 3.500 3.500M1 8.500l3.500-3.500 3.500 3.500" fill="none" stroke="#fff" stroke-width="1.300"/></svg>
<div style="left:5px;top:706px;width:199px;height:85px;background:#fff;border:1px solid #a0a0a0;border-top:none;box-sizing:border-box"></div>
<div class="ic" style="left:18px;top:716px;"><svg width="16" height="16" viewBox="0 0 16 16"><rect x=".5" y="1.500" width="14" height="13" rx="1" fill="#f6f8fe" stroke="#7f93cc"/><rect x="2.500" y="3.500" width="2.500" height="2.500" fill="#e8482a"/><rect x="2.500" y="7" width="2.500" height="2.500" fill="#3a7ad8"/><rect x="2.500" y="10.500" width="2.500" height="2.500" fill="#ea8a1e"/><path d="M7 5h6M7 8.500h6M7 12h6" stroke="#6a7aa8" stroke-width="1"/></svg></div>
<div class="seg" style="left:40.5px;top:717.5px;line-height:16px;height:16px;color:#1e1e1e"><span id="t45" style="letter-spacing:0.034px;">Verifica trasmittanze limite</span></div>
<div class="ic" style="left:18px;top:739px;"><svg width="16" height="16" viewBox="0 0 16 16"><rect x=".5" y="1.500" width="14" height="13" rx="1" fill="#eef2fc" stroke="#7f93cc"/><rect x="2" y="3" width="11" height="3" fill="#6fa4e8"/><g fill="#fff" stroke="#6f86c8" stroke-width=".8"><rect x="2.400" y="7.500" width="2.400" height="2.200"/><rect x="6.300" y="7.500" width="2.400" height="2.200"/><rect x="2.400" y="11" width="2.400" height="2.200"/><rect x="6.300" y="11" width="2.400" height="2.200"/></g><g fill="#f4a030" stroke="#c0741a" stroke-width=".8"><rect x="10.200" y="7.500" width="2.400" height="2.200"/><rect x="10.200" y="11" width="2.400" height="2.200"/></g></svg></div>
<div class="seg" style="left:40.5px;top:740.5px;line-height:16px;height:16px;color:#1e1e1e"><span id="t46" style="letter-spacing:-0.086px;">Rendimenti, fabbisogni ed EP</span></div>
<div class="ic" style="left:18px;top:763px;"><svg width="16" height="16" viewBox="0 0 16 16"><rect x=".5" y=".5" width="14.500" height="14.500" rx="1" fill="#f6f8fe" stroke="#7f93cc"/><rect x="2.500" y="9" width="2.600" height="4.500" rx="1" fill="#6aa8ea" stroke="#2f6ac0" stroke-width=".7"/><rect x="6.500" y="6" width="2.600" height="7.500" rx="1" fill="#f8b040" stroke="#c0741a" stroke-width=".7"/><rect x="10.500" y="3" width="2.600" height="10.500" rx="1" fill="#f0604a" stroke="#c0301e" stroke-width=".7"/></svg></div>
<div class="seg" style="left:40.5px;top:763.5px;line-height:16px;height:16px;color:#1e1e1e"><span id="t47" style="letter-spacing:0.017px;">Bilancio energetico e consumi</span></div>
<div style="left:5px;top:795px;width:199px;height:25px;background:#a0a0a0"></div>
<div class="hdr" style="left:25.2px;top:799.5px;line-height:16px;height:16px;color:#fff"><span id="t48" style="letter-spacing:-0.034px;">Detrazioni fiscali</span></div>
<svg style="left:186px;top:803px" width="9" height="10" viewBox="0 0 9 10"><path d="M1 1.500l3.500 3.500 3.500-3.500M1 5.500l3.500 3.500 3.500-3.500" fill="none" stroke="#fff" stroke-width="1.300"/></svg>
<div style="left:5px;top:824px;width:199px;height:25px;background:#a0a0a0"></div>
<div class="hdr" style="left:25.2px;top:828.5px;line-height:16px;height:16px;color:#fff"><span id="t49" style="letter-spacing:-0.089px;">Documenti</span></div>
<svg style="left:186px;top:832px" width="9" height="10" viewBox="0 0 9 10"><path d="M1 4.500l3.500-3.500 3.500 3.500M1 8.500l3.500-3.500 3.500 3.500" fill="none" stroke="#fff" stroke-width="1.300"/></svg>
<div style="left:5px;top:849px;width:199px;height:39px;background:#fff;border:1px solid #a0a0a0;border-top:none;box-sizing:border-box"></div>
<div class="ic" style="left:18px;top:860px;"><svg width="16" height="16" viewBox="0 0 16 16"><rect x="2.500" y="2.500" width="11" height="12" fill="#fbfbfb" stroke="#8a909c"/><path d="M5 3.500V2h1.500V.8h3V2H11v1.500z" fill="#4a82d0"/><path d="M4.500 6.500h7M4.500 8.500h7M4.500 10.500h4" stroke="#b4bac8" stroke-width="1"/></svg></div>
<div class="seg" style="left:40.5px;top:860.5px;line-height:16px;height:16px;color:#1e1e1e"><span id="t50" style="letter-spacing:0.112px;">Registro documenti</span></div>
<svg style="left:209px;top:418px" width="7" height="214" viewBox="0 0 7 214"><defs><pattern id="spd" width="6" height="6" patternUnits="userSpaceOnUse"><rect x="1" y="1" width="2" height="2" fill="#fff"/><rect x="0" y="0" width="2" height="2" fill="#8e8e8e"/><rect x="4" y="4" width="2" height="2" fill="#fff"/><rect x="3" y="3" width="2" height="2" fill="#8e8e8e"/></pattern></defs><rect width="7" height="213" fill="url(#spd)"/></svg>
<div style="left:220px;top:163px;width:672px;height:21px;background:#a0a0a0"></div>
<div class="ic" style="left:225px;top:166px;"><svg width="16" height="16" viewBox="0 0 16 16"><path d="M1.500 3.500h12v11h-12z" fill="#f8cc5a" stroke="#c8901e"/><path d="M2 4h11v2.500H2z" fill="#fce4a4"/><circle cx="9.500" cy="3.500" r="2.600" fill="#3a72d8" stroke="#1e4ea8" stroke-width=".7"/><circle cx="8.800" cy="2.700" r=".9" fill="#d4e4ff"/></svg></div>
<div class="hdr" style="left:243.7px;top:165.7px;line-height:16px;height:16px;color:#fff"><span id="t51" style="letter-spacing:0.005px;">Dettaglio Generatore</span></div>
<div style="left:222px;top:187px;width:103px;height:20px;background:#f8f8f8;border:1px solid;border-color:#696969 #fff #fff #696969;box-shadow:inset 1px 1px 0 #b4b4b4;box-sizing:border-box"></div>
<div class="ms" style="left:231.8px;top:189.3px;line-height:16px;height:16px;"><span id="t52" style="display:inline-block;transform-origin:0 50%;transform:scaleX(0.9097);">DATI GENERALI</span></div>
<div style="left:329px;top:187px;width:1px;height:20px;background:#a0a0a0"></div>
<div style="left:330px;top:187px;width:1px;height:20px;background:#fff"></div>
<div class="ms" style="left:343.5px;top:188.3px;line-height:16px;height:16px;"><span id="t53" style="display:inline-block;transform-origin:0 50%;transform:scaleX(0.8923);">SOLARE TERMICO</span></div>
<div style="left:451px;top:187px;width:1px;height:20px;background:#a0a0a0"></div>
<div style="left:452px;top:187px;width:1px;height:20px;background:#fff"></div>
<div style="left:224px;top:214px;width:664px;height:21px;background:#a0a0a0"></div>
<div class="hdr" style="left:227.7px;top:216.6px;line-height:16px;height:16px;color:#fff"><span id="t54" style="letter-spacing:0.035px;">Dati generali del generatore</span></div>
<div style="left:226px;top:239px;width:109px;height:19px;background:#ffffe1;border:1px solid #a0a0a0;box-sizing:border-box"></div>
<div class="ms" style="left:229.9px;top:240.8px;line-height:16px;height:16px;"><span id="t55" style="display:inline-block;transform-origin:0 50%;transform:scaleX(0.8886);">Descrizione breve:</span></div>
<div style="left:337px;top:239px;width:225px;height:19px;background:#fff;border:1px solid #a0a0a0;box-sizing:border-box"></div>
<div class="ms" style="left:338.4px;top:239.8px;line-height:16px;height:16px;color:#000"><span id="t56" style="display:inline-block;transform-origin:0 50%;transform:scaleX(0.8996);">Solare Termico</span></div>
<div style="left:226px;top:260px;width:109px;height:19px;background:#ffffe1;border:1px solid #a0a0a0;box-sizing:border-box"></div>
<div class="ms" style="left:229.9px;top:261.8px;line-height:16px;height:16px;"><span id="t57" style="display:inline-block;transform-origin:0 50%;transform:scaleX(0.885);">Tipologia:</span></div>
<div style="left:337px;top:260px;width:225px;height:19px;background:#f0f0f0;border:1px solid #a0a0a0;box-sizing:border-box"></div>
<div class="ms" style="left:338.4px;top:260.8px;line-height:16px;height:16px;color:#a0a0a0"><span id="t58" style="display:inline-block;transform-origin:0 50%;transform:scaleX(0.8895);">SOLARE TERMICO</span></div>
<div style="left:549px;top:268px;width:0;height:0;border-left:3.5px solid transparent;border-right:3.5px solid transparent;border-top:4px solid #a0a0a0"></div>
<div style="left:226px;top:281px;width:109px;height:19px;background:#ffffe1;border:1px solid #a0a0a0;box-sizing:border-box"></div>
<div class="ms" style="left:229.9px;top:282.8px;line-height:16px;height:16px;"><span id="t59" style="display:inline-block;transform-origin:0 50%;transform:scaleX(0.885);">Ubicazione:</span></div>
<div style="left:337px;top:281px;width:225px;height:19px;background:#fff;border:1px solid #a0a0a0;box-sizing:border-box"></div>
<div class="ms" style="left:338.4px;top:281.8px;line-height:16px;height:16px;color:#000"><span id="t60" style="display:inline-block;transform-origin:0 50%;transform:scaleX(0.885);">All'aperto</span></div>
<div style="left:545px;top:283px;width:15px;height:15px;background:#f0f0f0"></div>
<div style="left:549px;top:289px;width:0;height:0;border-left:3.5px solid transparent;border-right:3.5px solid transparent;border-top:4px solid #000"></div>
<div style="left:226px;top:302px;width:109px;height:19px;background:#ffffe1;border:1px solid #a0a0a0;box-sizing:border-box"></div>
<div class="ms" style="left:229.9px;top:303.8px;line-height:16px;height:16px;"><span id="t61" style="display:inline-block;transform-origin:0 50%;transform:scaleX(0.8705);">Fluido termovettore:</span></div>
<div style="left:337px;top:302px;width:225px;height:19px;background:#f0f0f0;border:1px solid #a0a0a0;box-sizing:border-box"></div>
<div style="left:549px;top:310px;width:0;height:0;border-left:3.5px solid transparent;border-right:3.5px solid transparent;border-top:4px solid #a0a0a0"></div>
<div style="left:226px;top:323px;width:109px;height:19px;background:#ffffe1;border:1px solid #a0a0a0;box-sizing:border-box"></div>
<div class="ms" style="left:229.9px;top:324.8px;line-height:16px;height:16px;"><span id="t62" style="display:inline-block;transform-origin:0 50%;transform:scaleX(0.885);">Combustibile:</span></div>
<div style="left:337px;top:323px;width:225px;height:19px;background:#f0f0f0;border:1px solid #a0a0a0;box-sizing:border-box"></div>
<div style="left:549px;top:331px;width:0;height:0;border-left:3.5px solid transparent;border-right:3.5px solid transparent;border-top:4px solid #a0a0a0"></div>
<div class="seg" style="left:589.7px;top:241.0px;line-height:16px;height:16px;color:#0066cc;font-weight:bold;text-decoration:underline"><span id="t63" style="letter-spacing:0.077px;">Preleva da archivio</span></div>
<div style="left:568px;top:260px;width:239px;height:19px;background:#f5cba7;border:1px solid #a0a0a0;box-sizing:border-box"></div>
<div class="seg" style="left:639.2px;top:261.5px;line-height:16px;height:16px;color:#000;font-weight:bold"><span id="t64" style="letter-spacing:0.712px;">UNI/TS 11300-4</span></div>
<div style="left:227px;top:347px;width:11px;height:11px;background:#f0f0f0;border:1px solid #b4b4b4;box-sizing:border-box"></div>
<div class="ms" style="left:244.1px;top:343.8px;line-height:16px;height:16px;color:#a0a0a0"><span id="t65" style="display:inline-block;transform-origin:0 50%;transform:scaleX(0.8731);">Circuito di distribuzione del generatore</span></div>
<div style="left:224px;top:364px;width:664px;height:21px;background:#a0a0a0"></div>
<div class="hdr" style="left:227.8px;top:366.5px;line-height:16px;height:16px;color:#fff"><span id="t66" style="letter-spacing:-0.013px;">Servizi gestiti del generatore</span></div>
<div style="left:227px;top:396px;width:11px;height:11px;background:#fff;border:1px solid #9c9c9c;box-sizing:border-box"><svg width="9" height="9" viewBox="0 0 9 9" style="left:0;top:0;position:absolute"><path d="M1.500 4.200l2 2.300 4-4.500" fill="none" stroke="#000" stroke-width="1.900"/></svg></div>
<div class="ms" style="left:244.1px;top:392.7px;line-height:16px;height:16px;"><span id="t67" style="display:inline-block;transform-origin:0 50%;transform:scaleX(0.8850);">Servizio RISCALDAMENTO</span></div>
<div style="left:227px;top:414px;width:11px;height:11px;background:#fff;border:1px solid #9c9c9c;box-sizing:border-box"><svg width="9" height="9" viewBox="0 0 9 9" style="left:0;top:0;position:absolute"><path d="M1.500 4.200l2 2.300 4-4.500" fill="none" stroke="#000" stroke-width="1.900"/></svg></div>
<div class="ms" style="left:244.1px;top:410.7px;line-height:16px;height:16px;"><span id="t68" style="display:inline-block;transform-origin:0 50%;transform:scaleX(0.8784);">Servizio A.C.S.</span></div>
<div style="left:897px;top:158px;width:344px;height:20px;border:1px solid #fafafa;border-radius:3px;box-sizing:border-box"></div>
<div style="left:898px;top:159px;width:342px;height:18px;background:#f0f0f0;border:1px solid #8f8f8f;border-radius:2px;box-sizing:border-box"></div>
<svg style="left:1226px;top:163px" width="8" height="10" viewBox="0 0 8 10"><rect x="1.500" y=".5" width="4.500" height="6" fill="#fff" stroke="#000"/><rect x="4.500" y="0" width="2" height="7" fill="#000"/><rect x="0" y="6" width="7.500" height="1" fill="#000"/><rect x="3" y="7" width="1" height="2.500" fill="#000"/></svg>
<div style="left:1242px;top:157px;width:22px;height:735px;background:#fff"></div>
<div style="left:1244px;top:161px;width:20px;height:92px;background:#f0f0f0;border:1px solid #9a9a9a;border-right:none;box-sizing:border-box"></div>
<div class="ic" style="left:1246px;top:165px;"><svg width="16" height="16" viewBox="0 0 16 16"><rect x="2.500" y="1.500" width="11" height="13" fill="#eef4ff" stroke="#7fa0e4"/><path d="M5 1.500h4v6l-2-1.500-2 1.500z" fill="#d42a2a"/><path d="M4.500 10h7M4.500 12h7" stroke="#9ab8ec" stroke-width="1"/></svg></div>
<div class="tah" style="left:1246px;top:187px;width:16px;height:64px;writing-mode:vertical-rl;font-weight:bold;font-size:11px;line-height:16px;color:#000"><span id="tseg" style="letter-spacing:0.4px">Segnalibro</span></div>
<div class="ser" style="left:905.6px;top:185.5px;line-height:16px;height:16px;"><span id="t69" style="letter-spacing:0.739px;">Impianto</span></div>
<div style="left:908px;top:207px;width:315px;height:51px;background:#f0f0f0;border:1px solid #5e5e5e;box-sizing:border-box"></div>
<div class="ic" style="left:914.5px;top:216.5px;"><svg width="16" height="16" viewBox="0 0 16 16"><circle cx="8" cy="8" r="7.300" fill="#fdfdff" stroke="#6f86cc" stroke-width="1"/><path d="M3.800 12A5.800 5.800 0 0 1 8 2.200" fill="none" stroke="#5a9ae8" stroke-width="1.800"/><path d="M12.600 5l-.3 5.500-1.500-.8z" fill="#e8402a"/><path d="M7.200 9L12 3" stroke="#222" stroke-width="1.200"/><circle cx="7.200" cy="9" r="1.500" fill="#2a3a5a"/></svg></div>
<div class="tah13" style="left:934.6px;top:218.4px;line-height:16px;height:16px;"><span id="t70" style="letter-spacing:-0.051px;">Inserisci nuovo impianto</span></div>
<div class="tah10" style="left:934.6px;top:234.0px;line-height:16px;height:16px;"><span id="t71" style="letter-spacing:0.133px;">Crea un nuovo impianto per singolo servizio o combinato</span></div>
<div style="left:906px;top:263px;width:156px;height:25px;background:#f0f0f0;border:1px solid #5e5e5e;box-sizing:border-box"></div>
<div class="ic" style="left:924px;top:267px;"><svg width="16" height="17" viewBox="0 0 16 17"><defs><linearGradient id="g12" x1="0" y1="0" x2="1" y2="1"><stop offset="0" stop-color="#ffffff"/><stop offset="1" stop-color="#ccd6f4"/></linearGradient></defs><rect x="1.500" y="1.500" width="12" height="12.500" fill="url(#g12)" stroke="#7f93cc"/><g transform="translate(1.800,2) scale(.88)"><path d="M7.500 7.500L14 14.800" stroke="#4a5a7c" stroke-width="4" stroke-linecap="round"/><circle cx="5.800" cy="5.800" r="3.700" fill="#a9b8d4" stroke="#4a5a7c" stroke-width=".9"/><path d="M7.500 7.500L14 14.800" stroke="#b4c2dc" stroke-width="2.200" stroke-linecap="round"/><path d="M4.600 6.600L1.600 3.600 3.600 1.600 6.600 4.600z" fill="#f2f5fd"/><path d="M2.300 4.300L4.600 6.600 6.600 4.600 4.300 2.300" fill="none" stroke="#4a5a7c" stroke-width=".8"/></g></svg></div>
<div class="tah13" style="left:943.6px;top:268.3px;line-height:16px;height:16px;"><span id="t72" style="letter-spacing:0.040px;">Modifica impianto</span></div>
<div style="left:1065px;top:263px;width:156px;height:25px;background:#f0f0f0;border:1px solid #5e5e5e;box-sizing:border-box"></div>
<div class="ic" style="left:1086px;top:267px;"><svg width="16" height="16" viewBox="0 0 16 16"><defs><linearGradient id="g3" x1="0" y1="0" x2="0" y2="1"><stop offset="0" stop-color="#ff7a4a"/><stop offset="1" stop-color="#e8280a"/></linearGradient></defs><rect x="3" y="6" width="10" height="4.500" fill="url(#g3)"/><rect x="3" y="6" width="10" height="1" fill="#ff9a6a" opacity=".7"/></svg></div>
<div class="tah13" style="left:1105.8px;top:268.3px;line-height:16px;height:16px;"><span id="t73" style="letter-spacing:-0.065px;">Elimina impianto</span></div>
<div style="left:906px;top:299px;width:315px;height:51px;background:#f0f0f0;border:1px solid #5e5e5e;box-sizing:border-box"></div>
<div class="ic" style="left:913px;top:310px;"><svg width="16" height="16" viewBox="0 0 16 16"><path d="M1 6l5-2.500 4 .5 4 2.500-1 1-5-1-3 2z" fill="#8a8a8a" stroke="#5a5a5a" stroke-width=".7" stroke-linejoin="round"/><path d="M6 3.500l1.500-1 2 .3.500 1.200" fill="#b0b0b0" stroke="#5a5a5a" stroke-width=".6"/><circle cx="7.500" cy="9" r="2.300" fill="#b8dcfc" stroke="#707880" stroke-width=".9"/><circle cx="13" cy="8" r="2.100" fill="#b8dcfc" stroke="#707880" stroke-width=".9"/></svg></div>
<div class="tah13" style="left:932.7px;top:310.3px;line-height:16px;height:16px;"><span id="t74" style="letter-spacing:-0.103px;">Inserisci nuovo componente</span></div>
<div class="tah10" style="left:932.7px;top:326.2px;line-height:16px;height:16px;"><span id="t75" style="letter-spacing:0.070px;">Inserisci un nuovo componente per l'impianto selezionato</span></div>
<div style="left:906px;top:353px;width:156px;height:25px;background:#f0f0f0;border:1px solid #5e5e5e;box-sizing:border-box"></div>
<div class="ic" style="left:916px;top:357px;"><svg width="16" height="16" viewBox="0 0 16 16"><defs><linearGradient id="g6" x1="0" y1="0" x2="1" y2="1"><stop offset="0" stop-color="#b5dd7a"/><stop offset="1" stop-color="#79b02e"/></linearGradient></defs><rect x="1.500" y="1.500" width="8" height="8" fill="url(#g6)" stroke="#5f8f2a"/><rect x="2.500" y="2.500" width="6" height="6" fill="none" stroke="#d5efae" stroke-width="1" opacity=".7"/><rect x="6.500" y="6.500" width="8" height="8" fill="url(#g6)" stroke="#5f8f2a"/><rect x="7.500" y="7.500" width="6" height="6" fill="none" stroke="#d5efae" stroke-width="1" opacity=".7"/></svg></div>
<div class="tah13" style="left:935.8px;top:358.3px;line-height:16px;height:16px;"><span id="t76" style="letter-spacing:-0.178px;">Duplica componente</span></div>
<div style="left:1065px;top:353px;width:156px;height:25px;background:#f0f0f0;border:1px solid #5e5e5e;box-sizing:border-box"></div>
<div class="ic" style="left:1075px;top:357px;"><svg width="16" height="16" viewBox="0 0 16 16"><defs><linearGradient id="g3" x1="0" y1="0" x2="0" y2="1"><stop offset="0" stop-color="#ff7a4a"/><stop offset="1" stop-color="#e8280a"/></linearGradient></defs><rect x="3" y="6" width="10" height="4.500" fill="url(#g3)"/><rect x="3" y="6" width="10" height="1" fill="#ff9a6a" opacity=".7"/></svg></div>
<div class="tah13" style="left:1094.5px;top:358.3px;line-height:16px;height:16px;"><span id="t77" style="letter-spacing:-0.117px;">Elimina componente</span></div>
<div class="ser" style="left:905.6px;top:390.5px;line-height:16px;height:16px;"><span id="t78" style="letter-spacing:0.612px;">Edificio e strutture</span></div>
<div style="left:906px;top:414px;width:100px;height:25px;background:#f0f0f0;border:1px solid #5e5e5e;box-sizing:border-box"></div>
<div class="ic" style="left:915px;top:418px;"><svg width="16" height="16" viewBox="0 0 16 16"><defs><linearGradient id="g1" x1="0" y1="0" x2="0" y2="1"><stop offset="0" stop-color="#5fd05a"/><stop offset="1" stop-color="#2fa82f"/></linearGradient></defs><path d="M6.500 3.500h3v3h3v3h-3v3h-3v-3h-3v-3h3z" fill="url(#g1)" stroke="#2a962a" stroke-width="1" stroke-linejoin="round"/></svg></div>
<div class="tah13" style="left:934.7px;top:419.3px;line-height:16px;height:16px;"><span id="t79" style="letter-spacing:-0.220px;">Appendi</span></div>
<div style="left:992.6px;top:425px;width:0;height:0;border-left:4px solid transparent;border-right:4px solid transparent;border-top:4px solid #000"></div>
<div style="left:1009px;top:414px;width:25px;height:25px;background:#f0f0f0;border:1px solid #5e5e5e;box-sizing:border-box"></div>
<div class="ic" style="left:1013px;top:418px;"><svg width="16" height="16" viewBox="0 0 16 16"><defs><linearGradient id="g3" x1="0" y1="0" x2="0" y2="1"><stop offset="0" stop-color="#ff7a4a"/><stop offset="1" stop-color="#e8280a"/></linearGradient></defs><rect x="3" y="6" width="10" height="4.500" fill="url(#g3)"/><rect x="3" y="6" width="10" height="1" fill="#ff9a6a" opacity=".7"/></svg></div>
<div style="left:1037px;top:414px;width:25px;height:25px;background:#f0f0f0;border:1px solid #5e5e5e;box-sizing:border-box"></div>
<div class="ic" style="left:1041px;top:418px;"><svg width="16" height="16" viewBox="0 0 16 16"><defs><linearGradient id="g6" x1="0" y1="0" x2="1" y2="1"><stop offset="0" stop-color="#b5dd7a"/><stop offset="1" stop-color="#79b02e"/></linearGradient></defs><rect x="1.500" y="1.500" width="8" height="8" fill="url(#g6)" stroke="#5f8f2a"/><rect x="2.500" y="2.500" width="6" height="6" fill="none" stroke="#d5efae" stroke-width="1" opacity=".7"/><rect x="6.500" y="6.500" width="8" height="8" fill="url(#g6)" stroke="#5f8f2a"/><rect x="7.500" y="7.500" width="6" height="6" fill="none" stroke="#d5efae" stroke-width="1" opacity=".7"/></svg></div>
<div style="left:1065px;top:414px;width:25px;height:25px;background:#f0f0f0;border:1px solid #5e5e5e;box-sizing:border-box"></div>
<div class="ic" style="left:1069px;top:418px;"><svg width="16" height="16" viewBox="0 0 16 16"><defs><linearGradient id="g7" x1="0" y1="0" x2="1" y2="1"><stop offset="0" stop-color="#ffffff"/><stop offset="1" stop-color="#dde4f6"/></linearGradient></defs><rect x="5.500" y="1.500" width="9" height="11" rx="1" fill="url(#g7)" stroke="#6f82c4"/><rect x="2.500" y="4.500" width="9" height="11" rx="1" fill="url(#g7)" stroke="#6f82c4"/></svg></div>
<div style="left:1093px;top:414px;width:25px;height:25px;background:#f0f0f0;border:1px solid #5e5e5e;box-sizing:border-box"></div>
<div class="ic" style="left:1097px;top:418px;"><svg width="16" height="16" viewBox="0 0 16 16"><defs><linearGradient id="g7" x1="0" y1="0" x2="1" y2="1"><stop offset="0" stop-color="#ffffff"/><stop offset="1" stop-color="#dde4f6"/></linearGradient><linearGradient id="g8" x1="0" y1="0" x2="1" y2="0"><stop offset="0" stop-color="#f6d08a"/><stop offset="1" stop-color="#c98a2e"/></linearGradient></defs><rect x="2.500" y="2.500" width="10" height="11.500" rx="1.200" fill="url(#g8)" stroke="#a8701e"/><rect x="4.500" y="1" width="6" height="2.500" rx="1" fill="#c4cce0" stroke="#7a86a8" stroke-width=".8"/><rect x="6.500" y="6.500" width="8" height="9" rx=".8" fill="url(#g7)" stroke="#6f82c4"/></svg></div>
<div style="left:1121px;top:414px;width:25px;height:25px;background:#f0f0f0;border:1px solid #5e5e5e;box-sizing:border-box"></div>
<div class="ic" style="left:1125px;top:418px;"><svg width="16" height="16" viewBox="0 0 16 16"><path d="M2.500 1.500h7.500l3.500 3.500v9.500h-11z" fill="#fdfdff" stroke="#8a9ccc"/><path d="M10 1.500v3.500h3.500" fill="#e8ecf8" stroke="#8a9ccc" stroke-width=".8"/><rect x=".5" y="5.500" width="15" height="7" fill="#d42a2a"/><text x="8" y="11.200" font-family="Liberation Sans, sans-serif" font-size="6" font-weight="bold" fill="#fff" text-anchor="middle" textLength="12" lengthAdjust="spacingAndGlyphs">PDF</text></svg></div>
<div style="left:1149px;top:414px;width:25px;height:25px;background:#f0f0f0;border:1px solid #5e5e5e;box-sizing:border-box"></div>
<div class="ic" style="left:1154px;top:418px;"><svg width="16" height="16" viewBox="0 0 16 16"><path d="M2.500 1.500h7.500l3.500 3.500v9.500h-11z" fill="#fdfdff" stroke="#8a9ccc"/><path d="M10 1.500v3.500h3.500" fill="#e8ecf8" stroke="#8a9ccc" stroke-width=".8"/><rect x=".5" y="5.500" width="15" height="7" fill="#3a72c8"/><text x="8" y="11.200" font-family="Liberation Sans, sans-serif" font-size="6" font-weight="bold" fill="#fff" text-anchor="middle" textLength="12" lengthAdjust="spacingAndGlyphs">DOC</text></svg></div>
<div style="left:906px;top:442px;width:315px;height:63px;background:#f0f0f0;border:1px solid #5e5e5e;box-sizing:border-box"></div>
<div class="ic" style="left:913px;top:451px;"><svg width="16" height="17" viewBox="0 0 16 17"><defs><linearGradient id="g12" x1="0" y1="0" x2="1" y2="1"><stop offset="0" stop-color="#ffffff"/><stop offset="1" stop-color="#ccd6f4"/></linearGradient></defs><rect x="1.500" y="1.500" width="12" height="12.500" fill="url(#g12)" stroke="#7f93cc"/><g transform="translate(1.800,2) scale(.88)"><path d="M7.500 7.500L14 14.800" stroke="#4a5a7c" stroke-width="4" stroke-linecap="round"/><circle cx="5.800" cy="5.800" r="3.700" fill="#a9b8d4" stroke="#4a5a7c" stroke-width=".9"/><path d="M7.500 7.500L14 14.800" stroke="#b4c2dc" stroke-width="2.200" stroke-linecap="round"/><path d="M4.600 6.600L1.600 3.600 3.600 1.600 6.600 4.600z" fill="#f2f5fd"/><path d="M2.300 4.300L4.600 6.600 6.600 4.600 4.300 2.300" fill="none" stroke="#4a5a7c" stroke-width=".8"/></g></svg></div>
<div class="tah13" style="left:933.0px;top:452.7px;line-height:16px;height:16px;"><span id="t80" style="letter-spacing:-0.063px;">Modifica tipologia elemento</span></div>
<div class="tah10" style="left:933.0px;top:468.7px;line-height:16px;height:16px;"><span id="t81" style="letter-spacing:-0.057px;">Permette di modificare la stratigrafia della struttura selezionata o</span></div>
<div class="tah10" style="left:933.0px;top:480.7px;line-height:16px;height:16px;"><span id="t82" style="letter-spacing:0.030px;">il dettaglio dell'infisso o del ponte termico</span></div>
<div style="left:906px;top:508px;width:315px;height:63px;background:#f0f0f0;border:1px solid #5e5e5e;box-sizing:border-box"></div>
<div class="ic" style="left:913px;top:517px;"><svg width="16" height="17" viewBox="0 0 16 17"><defs><linearGradient id="g12" x1="0" y1="0" x2="1" y2="1"><stop offset="0" stop-color="#ffffff"/><stop offset="1" stop-color="#ccd6f4"/></linearGradient></defs><rect x="1.500" y="1.500" width="12" height="12.500" fill="url(#g12)" stroke="#7f93cc"/><g transform="translate(1.800,2) scale(.88)"><path d="M7.500 7.500L14 14.800" stroke="#4a5a7c" stroke-width="4" stroke-linecap="round"/><circle cx="5.800" cy="5.800" r="3.700" fill="#a9b8d4" stroke="#4a5a7c" stroke-width=".9"/><path d="M7.500 7.500L14 14.800" stroke="#b4c2dc" stroke-width="2.200" stroke-linecap="round"/><path d="M4.600 6.600L1.600 3.600 3.600 1.600 6.600 4.600z" fill="#f2f5fd"/><path d="M2.300 4.300L4.600 6.600 6.600 4.600 4.300 2.300" fill="none" stroke="#4a5a7c" stroke-width=".8"/></g></svg></div>
<div class="tah13" style="left:933.0px;top:518.7px;line-height:16px;height:16px;"><span id="t83" style="letter-spacing:-0.046px;">Modifica parete o solaio composto</span></div>
<div class="tah10" style="left:933.0px;top:534.7px;line-height:16px;height:16px;"><span id="t84" style="letter-spacing:0.013px;">Permette di definire la parete o il solaio indicandone i</span></div>
<div class="tah10" style="left:933.0px;top:546.7px;line-height:16px;height:16px;"><span id="t85" style="letter-spacing:0.090px;">componenti principali e secondari</span></div>
<div style="left:906px;top:574px;width:315px;height:25px;background:#f0f0f0;border:1px solid #5e5e5e;box-sizing:border-box"></div>
<div class="ic" style="left:914px;top:578px;"><svg width="16" height="16" viewBox="0 0 16 16"><path d="M1.500 7.800C1.500 4.500 4.500 2.800 8.500 3.200V1l5.500 3.800-5.500 3.700V6.200C6 5.900 4.300 6.600 3.800 8.300z" fill="#7cc84a" stroke="#3f8f1e" stroke-width=".8" stroke-linejoin="round"/><path d="M14.500 8.200c0 3.300-3 5-7 4.600V15L2 11.200l5.500-3.700v2.300c2.500.300 4.200-.4 4.700-2.100z" fill="#7fb4ea" stroke="#3a78c4" stroke-width=".8" stroke-linejoin="round"/></svg></div>
<div class="tah13" style="left:934.4px;top:579.3px;line-height:16px;height:16px;"><span id="t86" style="letter-spacing:0.024px;">Sostituisci strutture disperdenti</span></div>
<div style="left:1206.7px;top:585px;width:0;height:0;border-left:4px solid transparent;border-right:4px solid transparent;border-top:4px solid #000"></div>
<div style="left:906px;top:602px;width:315px;height:25px;background:#f0f0f0;border:1px solid #5e5e5e;box-sizing:border-box"></div>
<div class="ic" style="left:915px;top:606px;"><svg width="17" height="16" viewBox="0 0 17 16"><rect x="4.500" y=".5" width="4.500" height="4" fill="#9cc8f4" stroke="#3a72c0"/><path d="M6.700 4.500V7H3.200v2.500" fill="none" stroke="#5a5a5a" stroke-width=".9"/><rect x=".5" y="9.500" width="5.500" height="3.500" fill="#b8e06a" stroke="#5f9020"/><circle cx="12" cy="11" r="3.600" fill="#c4cad8" stroke="#5a6478" stroke-width="1.600" stroke-dasharray="1.600 1.200"/><circle cx="12" cy="11" r="2.600" fill="#c4cad8" stroke="#5a6478" stroke-width=".6"/><circle cx="12" cy="11" r="1.100" fill="#f4f4f4" stroke="#5a6478" stroke-width=".6"/></svg></div>
<div class="tah13" style="left:934.4px;top:607.3px;line-height:16px;height:16px;"><span id="t87" style="letter-spacing:0.023px;">Modifica multipla proprietà elementi</span></div>
<div style="left:1206.7px;top:613px;width:0;height:0;border-left:4px solid transparent;border-right:4px solid transparent;border-top:4px solid #000"></div>
<div style="left:906px;top:630px;width:315px;height:63px;background:#f0f0f0;border:1px solid #5e5e5e;box-sizing:border-box"></div>
<div class="ic" style="left:913px;top:642px;"><svg width="16" height="13" viewBox="0 0 16 13"><rect x=".5" y=".5" width="15" height="12" fill="#fff" stroke="#7f93cc"/><rect x="1" y="1" width="14" height="3" fill="#7fb0ec"/><path d="M.5 4h15M.5 7h15M.5 10h15M5.500 1v11.500M10.500 1v11.500" stroke="#9cb8e8" stroke-width="1"/></svg></div>
<div class="tah13" style="left:933.0px;top:640.7px;line-height:16px;height:16px;"><span id="t88" style="letter-spacing:-0.014px;">Riallinea archivi dei materiali</span></div>
<div class="tah10" style="left:933.0px;top:656.7px;line-height:16px;height:16px;"><span id="t89" style="letter-spacing:-0.099px;">Permette di sincronizzare l'elenco dei materiali utilizzati per la</span></div>
<div class="tah10" style="left:933.0px;top:668.7px;line-height:16px;height:16px;"><span id="t90" style="letter-spacing:-0.035px;">composizione delle stratigrafie con l'archivio di sistema</span></div>
<div style="left:906px;top:696px;width:179px;height:25px;background:#f0f0f0;border:1px solid #5e5e5e;box-sizing:border-box"></div>
<div class="ic" style="left:912px;top:700px;"><svg width="16" height="16" viewBox="0 0 16 16"><defs><linearGradient id="g21" x1="0" y1="0" x2="1" y2="0"><stop offset="0" stop-color="#f47a62"/><stop offset="1" stop-color="#d8402a"/></linearGradient></defs><path d="M1.500 1.500a1 1 0 0 1 1-1h7a1 1 0 0 1 1 1v12.500h-9z" fill="url(#g21)" stroke="#b8301e"/><rect x="2.500" y="1.500" width="7" height="2" fill="#fab0a0"/><path d="M7 9.800l4-1.800 4 1.800v4l-4 1.900-4-1.900z" fill="#fad060" stroke="#b8861a" stroke-width=".7" stroke-linejoin="round"/><path d="M7 9.800l4 1.800 4-1.800M11 11.600v4" fill="none" stroke="#b8861a" stroke-width=".7"/><path d="M11 11.600l4-1.800v4l-4 1.900z" fill="#f0a830"/></svg></div>
<div class="tah13" style="left:931.7px;top:701.3px;line-height:16px;height:16px;"><span id="t91" style="letter-spacing:0.015px;">Copia struttura in archivio</span></div>
<div style="left:1088px;top:696px;width:133px;height:25px;background:#f0f0f0;border:1px solid #5e5e5e;box-sizing:border-box"></div>
<div class="ic" style="left:1094px;top:700px;"><svg width="17" height="16" viewBox="0 0 17 16"><rect x=".5" y=".5" width="16" height="15" rx="1" fill="#f6f8fe" stroke="#5a70c4"/><path d="M2 4c4 2 8 5 13 9" stroke="#3a72c8" stroke-width="1" fill="none"/><path d="M2 13C7 9 11 6 15 2.500" stroke="#e43a2a" stroke-width="1" fill="none"/></svg></div>
<div class="tah13" style="left:1113.2px;top:701.3px;line-height:16px;height:16px;"><span id="t92" style="letter-spacing:-0.064px;">Verifica condensa</span></div>
<div style="left:1px;top:894px;width:967px;height:18px;border:1px solid;border-color:#a0a0a0 #fff #fff #a0a0a0;box-sizing:border-box"></div>
<div style="left:971px;top:894px;width:51px;height:18px;border:1px solid;border-color:#a0a0a0 #fff #fff #a0a0a0;box-sizing:border-box"></div>
<div class="seg" style="left:973.7px;top:895.0px;line-height:16px;height:16px;color:#000"><span id="t93" style="letter-spacing:-0.189px;">v. 17.01c</span></div>
<div style="left:1025px;top:894px;width:156px;height:18px;border:1px solid;border-color:#a0a0a0 #fff #fff #a0a0a0;box-sizing:border-box"></div>
<div style="left:1184px;top:894px;width:32px;height:18px;border:1px solid;border-color:#a0a0a0 #fff #fff #a0a0a0;box-sizing:border-box"></div>
<div class="seg" style="left:1186.2px;top:895.0px;line-height:16px;height:16px;color:#a0a0a0"><span id="t94" style="letter-spacing:-0.900px;">MAIU</span></div>
<div style="left:1219px;top:894px;width:30px;height:18px;border:1px solid;border-color:#a0a0a0 #fff #fff #a0a0a0;box-sizing:border-box"></div>
<div class="seg" style="left:1220.7px;top:895.0px;line-height:16px;height:16px;color:#000"><span id="t95" style="letter-spacing:-0.514px;">NUM</span></div>
<svg style="left:1252px;top:898px" width="14" height="14" viewBox="0 0 14 14"><path d="M13.500 1.500L1.500 13.500M13.500 5.500L5.500 13.500M13.500 9.500L9.500 13.500" stroke="#a0a0a0" stroke-width="1.400"/></svg>
</div></div></body></html>
